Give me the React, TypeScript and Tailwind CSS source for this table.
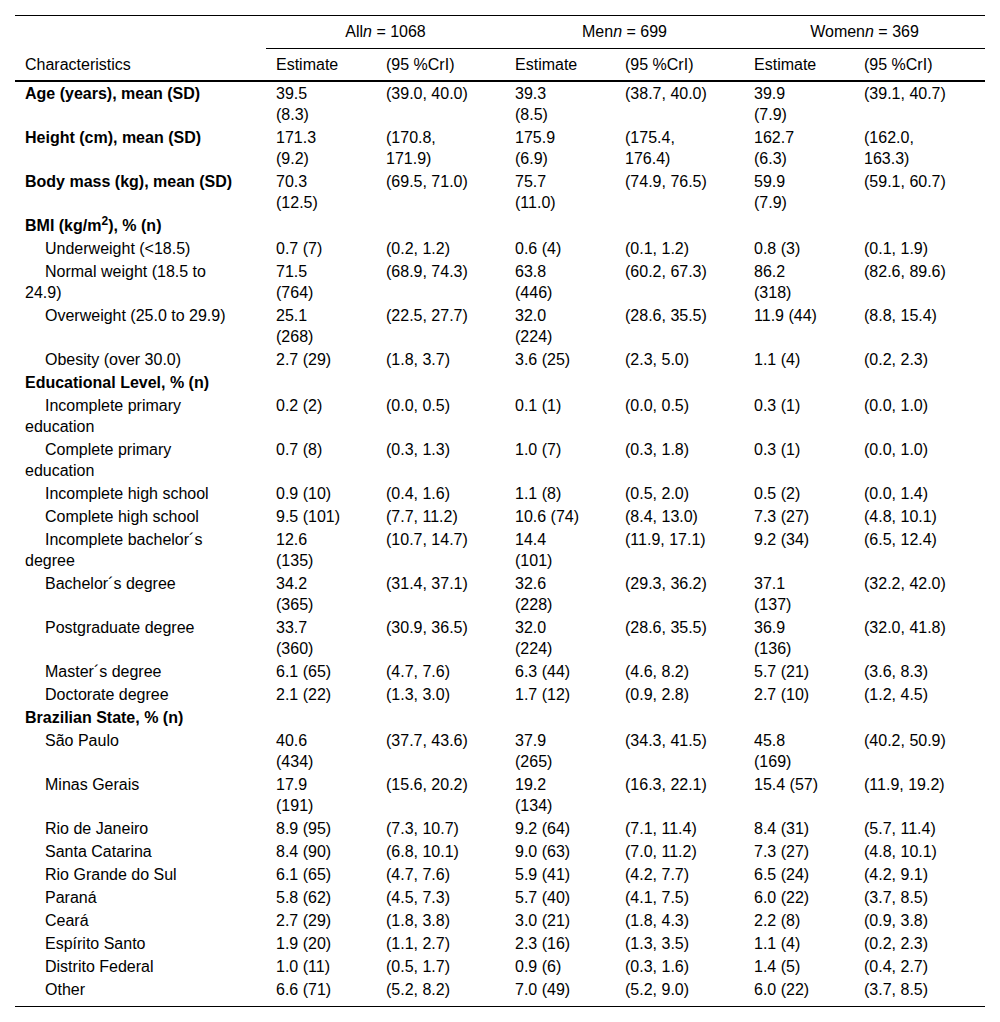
type Row = {
  label: string
  kind: "section" | "item"
  values?: string[]
}

const rows: Row[] = [
  { label: "Age (years), mean (SD)", kind: "section", values: ["39.5 (8.3)", "(39.0, 40.0)", "39.3 (8.5)", "(38.7, 40.0)", "39.9 (7.9)", "(39.1, 40.7)"] },
  { label: "Height (cm), mean (SD)", kind: "section", values: ["171.3 (9.2)", "(170.8, 171.9)", "175.9 (6.9)", "(175.4, 176.4)", "162.7 (6.3)", "(162.0, 163.3)"] },
  { label: "Body mass (kg), mean (SD)", kind: "section", values: ["70.3 (12.5)", "(69.5, 71.0)", "75.7 (11.0)", "(74.9, 76.5)", "59.9 (7.9)", "(59.1, 60.7)"] },
  { label: "BMI", kind: "section" },
  { label: "Underweight (<18.5)", kind: "item", values: ["0.7 (7)", "(0.2, 1.2)", "0.6 (4)", "(0.1, 1.2)", "0.8 (3)", "(0.1, 1.9)"] },
  { label: "Normal weight (18.5 to 24.9)", kind: "item", values: ["71.5 (764)", "(68.9, 74.3)", "63.8 (446)", "(60.2, 67.3)", "86.2 (318)", "(82.6, 89.6)"] },
  { label: "Overweight (25.0 to 29.9)", kind: "item", values: ["25.1 (268)", "(22.5, 27.7)", "32.0 (224)", "(28.6, 35.5)", "11.9 (44)", "(8.8, 15.4)"] },
  { label: "Obesity (over 30.0)", kind: "item", values: ["2.7 (29)", "(1.8, 3.7)", "3.6 (25)", "(2.3, 5.0)", "1.1 (4)", "(0.2, 2.3)"] },
  { label: "Educational Level, % (n)", kind: "section" },
  { label: "Incomplete primary education", kind: "item", values: ["0.2 (2)", "(0.0, 0.5)", "0.1 (1)", "(0.0, 0.5)", "0.3 (1)", "(0.0, 1.0)"] },
  { label: "Complete primary education", kind: "item", values: ["0.7 (8)", "(0.3, 1.3)", "1.0 (7)", "(0.3, 1.8)", "0.3 (1)", "(0.0, 1.0)"] },
  { label: "Incomplete high school", kind: "item", values: ["0.9 (10)", "(0.4, 1.6)", "1.1 (8)", "(0.5, 2.0)", "0.5 (2)", "(0.0, 1.4)"] },
  { label: "Complete high school", kind: "item", values: ["9.5 (101)", "(7.7, 11.2)", "10.6 (74)", "(8.4, 13.0)", "7.3 (27)", "(4.8, 10.1)"] },
  { label: "Incomplete bachelor´s degree", kind: "item", values: ["12.6 (135)", "(10.7, 14.7)", "14.4 (101)", "(11.9, 17.1)", "9.2 (34)", "(6.5, 12.4)"] },
  { label: "Bachelor´s degree", kind: "item", values: ["34.2 (365)", "(31.4, 37.1)", "32.6 (228)", "(29.3, 36.2)", "37.1 (137)", "(32.2, 42.0)"] },
  { label: "Postgraduate degree", kind: "item", values: ["33.7 (360)", "(30.9, 36.5)", "32.0 (224)", "(28.6, 35.5)", "36.9 (136)", "(32.0, 41.8)"] },
  { label: "Master´s degree", kind: "item", values: ["6.1 (65)", "(4.7, 7.6)", "6.3 (44)", "(4.6, 8.2)", "5.7 (21)", "(3.6, 8.3)"] },
  { label: "Doctorate degree", kind: "item", values: ["2.1 (22)", "(1.3, 3.0)", "1.7 (12)", "(0.9, 2.8)", "2.7 (10)", "(1.2, 4.5)"] },
  { label: "Brazilian State, % (n)", kind: "section" },
  { label: "São Paulo", kind: "item", values: ["40.6 (434)", "(37.7, 43.6)", "37.9 (265)", "(34.3, 41.5)", "45.8 (169)", "(40.2, 50.9)"] },
  { label: "Minas Gerais", kind: "item", values: ["17.9 (191)", "(15.6, 20.2)", "19.2 (134)", "(16.3, 22.1)", "15.4 (57)", "(11.9, 19.2)"] },
  { label: "Rio de Janeiro", kind: "item", values: ["8.9 (95)", "(7.3, 10.7)", "9.2 (64)", "(7.1, 11.4)", "8.4 (31)", "(5.7, 11.4)"] },
  { label: "Santa Catarina", kind: "item", values: ["8.4 (90)", "(6.8, 10.1)", "9.0 (63)", "(7.0, 11.2)", "7.3 (27)", "(4.8, 10.1)"] },
  { label: "Rio Grande do Sul", kind: "item", values: ["6.1 (65)", "(4.7, 7.6)", "5.9 (41)", "(4.2, 7.7)", "6.5 (24)", "(4.2, 9.1)"] },
  { label: "Paraná", kind: "item", values: ["5.8 (62)", "(4.5, 7.3)", "5.7 (40)", "(4.1, 7.5)", "6.0 (22)", "(3.7, 8.5)"] },
  { label: "Ceará", kind: "item", values: ["2.7 (29)", "(1.8, 3.8)", "3.0 (21)", "(1.8, 4.3)", "2.2 (8)", "(0.9, 3.8)"] },
  { label: "Espírito Santo", kind: "item", values: ["1.9 (20)", "(1.1, 2.7)", "2.3 (16)", "(1.3, 3.5)", "1.1 (4)", "(0.2, 2.3)"] },
  { label: "Distrito Federal", kind: "item", values: ["1.0 (11)", "(0.5, 1.7)", "0.9 (6)", "(0.3, 1.6)", "1.4 (5)", "(0.4, 2.7)"] },
  { label: "Other", kind: "item", values: ["6.6 (71)", "(5.2, 8.2)", "7.0 (49)", "(5.2, 9.0)", "6.0 (22)", "(3.7, 8.5)"] },
]

const groups = [
  { name: "All", n: "1068" },
  { name: "Men", n: "699" },
  { name: "Women", n: "369" },
]

// right padding per value column keeps the narrow wrap of the original
const valuePad = ["pr-[34px]", "pr-[33px]", "pr-[34px]", "pr-[33px]", "pr-[34px]", "pr-[35px]"]

export default function App() {
  return (
    <div className="min-h-screen bg-white px-[15px] pt-[15px] text-black" style={{ fontFamily: '"Liberation Sans", Arial, sans-serif' }}>
      <table className="w-[970px] table-fixed text-[16px] leading-[21px]">
        <colgroup>
          <col className="w-[251px]" />
          <col className="w-[110px]" />
          <col className="w-[129px]" />
          <col className="w-[110px]" />
          <col className="w-[129px]" />
          <col className="w-[110px]" />
          <col className="w-[131px]" />
        </colgroup>
        <thead>
          <tr className="border-t border-black">
            <th className="pt-[5px] pb-[6px]" />
            {groups.map((g) => (
              <th key={g.name} colSpan={2} className="border-b border-black pt-[5px] pb-[6px] text-center font-normal">
                {g.name}
                <i>n</i> = {g.n}
              </th>
            ))}
          </tr>
          <tr className="border-b-2 border-black">
            <th className="pl-[10px] pt-[5px] pb-[5px] text-left font-normal">Characteristics</th>
            {groups.map((g) => [
              <th key={g.name + "e"} className="pl-[10px] pr-[34px] pt-[5px] pb-[5px] text-left font-normal">
                Estimate
              </th>,
              <th key={g.name + "c"} className="pl-[10px] pr-[33px] pt-[5px] pb-[5px] text-left font-normal">
                (95 %CrI)
              </th>,
            ])}
          </tr>
        </thead>
        <tbody className="border-b border-black">
          {rows.map((row, i) => {
            const last = i === rows.length - 1
            const py = last ? "pt-px pb-[6px]" : "py-px"
            return (
              <tr key={row.label}>
                <td
                  className={`pl-[10px] pr-[27px] align-top ${py} ${
                    row.kind === "section" ? "font-bold" : "indent-5"
                  }`}
                >
                  {row.label === "BMI" ? (
                    <>
                      BMI (kg/m<sup>2</sup>), % (n)
                    </>
                  ) : (
                    row.label
                  )}
                </td>
                {(row.values ?? ["", "", "", "", "", ""]).map((v, j) => (
                  <td key={j} className={`pl-[10px] align-top ${valuePad[j]} ${py}`}>
                    {v}
                  </td>
                ))}
              </tr>
            )
          })}
        </tbody>
      </table>
    </div>
  )
}
